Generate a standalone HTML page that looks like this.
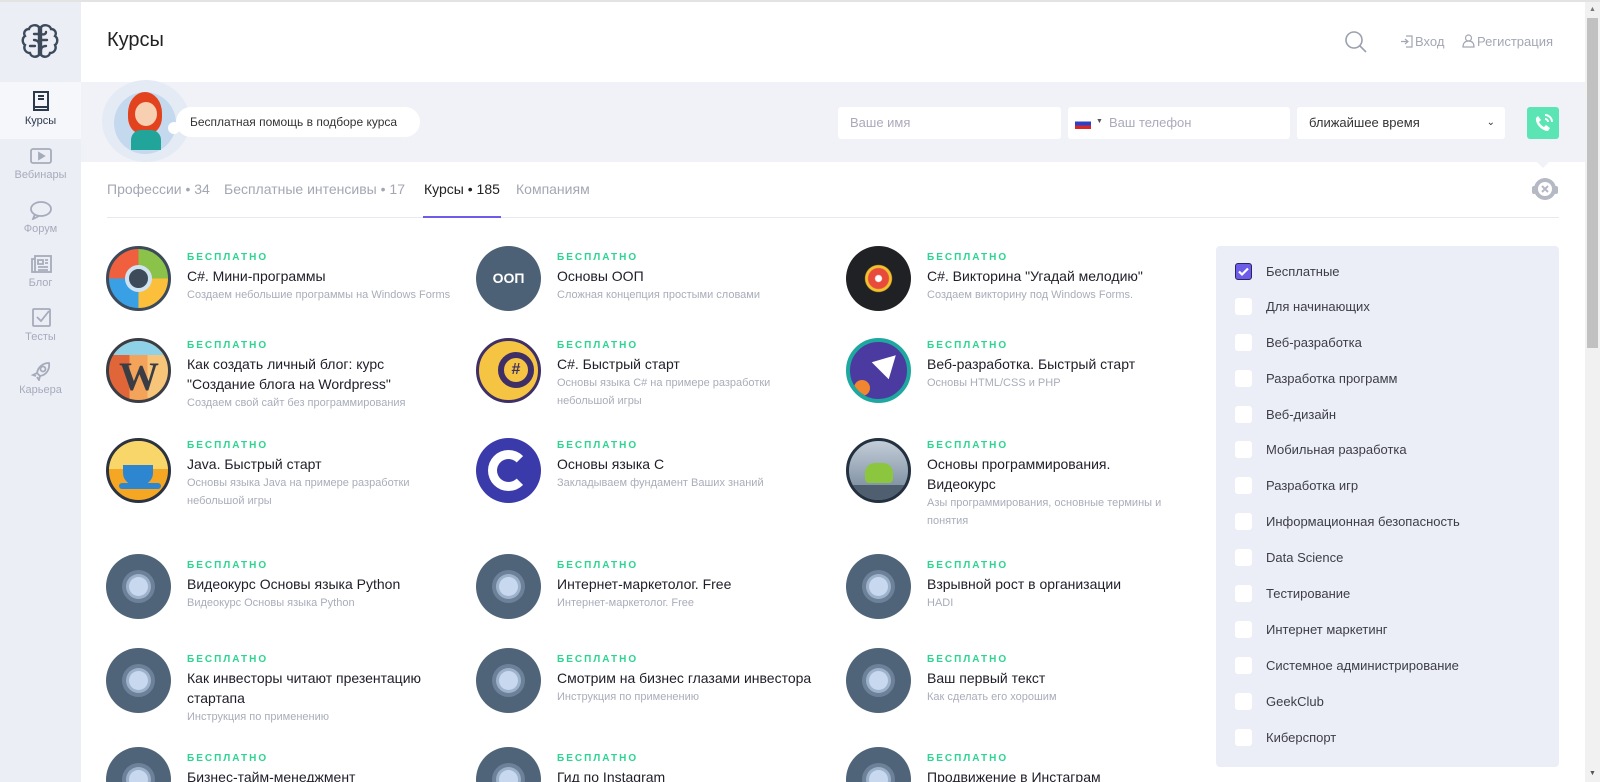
<!DOCTYPE html>
<html><head><meta charset="utf-8">
<style>
*{margin:0;padding:0;box-sizing:border-box}
html,body{width:1600px;height:782px;overflow:hidden}
body{background:#fff;font-family:"Liberation Sans","Noto Sans CJK SC",sans-serif;position:relative;color:#222}
.a{position:absolute}
#topline{left:0;top:0;width:1600px;height:2px;background:#e3e3e3}
#side{left:0;top:2px;width:81px;height:780px;background:#eceef6}
.nav{position:absolute;left:0;width:81px;text-align:center;font-size:11px;color:#a6abbb}
.nav svg{display:block;margin:0 auto 3px}
#band{left:81px;top:82px;width:1504px;height:80px;background:#f1f2f7}
.inp{position:absolute;top:107px;height:32px;background:#fff;border-radius:3px;font-size:13px;color:#aab;line-height:32px;padding-left:12px}
.tab{position:absolute;top:181px;font-size:14px;color:#a3a7b3}
.it{position:absolute;width:360px}
.ic{position:absolute;left:0;top:0;width:65px;height:65px;border-radius:50%;overflow:hidden}
.tx{position:absolute;left:81px;top:4px;width:270px}
.up .tx{top:0}
.b{font-size:10px;font-weight:bold;letter-spacing:2px;color:#2ed492;line-height:16px}
.t{font-size:14px;color:#1e1e28;line-height:20px}
.d{font-size:11px;color:#a9adb9;line-height:18px}
.g{background:#4f6479}
.g::before{content:"";position:absolute;left:16px;top:16px;width:33px;height:33px;border-radius:50%;background:#6d8299}
.g::after{content:"";position:absolute;left:23px;top:23px;width:19px;height:19px;border-radius:50%;background:#c8d8ee;box-shadow:0 0 0 3px #9db2cb}
#panel{left:1216px;top:246px;width:343px;height:521px;background:#eceef7;border-radius:4px}
.f{position:absolute;left:19px;font-size:13px;color:#3d3d48;height:18px;line-height:18px}
.f i{position:absolute;left:0;top:0;width:17px;height:17px;background:#fff;border-radius:3px}
.f span{position:absolute;left:31px;white-space:nowrap}
</style></head><body>
<div class="a" id="topline"></div>
<div class="a" id="side"></div>
<svg class="a" style="left:20px;top:22px" width="40" height="40" viewBox="0 0 40 40" fill="none" stroke="#3c4a5c" stroke-width="2.4" stroke-linecap="round"><path d="M19 5c-3-3-9-2-10 2-4 0-6 4-4 7-3 2-3 7 0 9-2 4 1 8 5 8 1 4 6 5 9 2zM21 5c3-3 9-2 10 2 4 0 6 4 4 7 3 2 3 7 0 9 2 4-1 8-5 8-1 4-6 5-9 2z"/><path d="M19 12h-5M14 18c3 0 5 2 5 4M10 24h5M21 12c3 1 5 0 5-2M21 18h6M26 24c-2 0-5 1-5 4"/></svg>
<div class="a" style="left:0;top:82px;width:81px;height:57px;background:#f6f7fb"></div>
<div class="nav" style="top:90px;color:#2d3a4b"><svg width="22" height="22" viewBox="0 0 22 22" fill="none" stroke="#2d3a4b" stroke-width="2"><rect x="4" y="2" width="14" height="18"/><path d="M4 17h14M8 6h6M8 9h6"/></svg>Курсы</div>
<div class="nav" style="top:146px"><svg width="24" height="20" viewBox="0 0 24 20" fill="none" stroke="#a6abbb" stroke-width="1.8"><rect x="2" y="3" width="20" height="14" rx="2"/><path d="M10 7l5 3-5 3z" fill="#a6abbb"/></svg>Вебинары</div>
<div class="nav" style="top:200px"><svg width="24" height="20" viewBox="0 0 24 20" fill="none" stroke="#a6abbb" stroke-width="1.8"><ellipse cx="12" cy="9" rx="10" ry="7"/><path d="M6 14l-2 5 6-3"/></svg>Форум</div>
<div class="nav" style="top:254px"><svg width="24" height="20" viewBox="0 0 24 20" fill="none" stroke="#a6abbb" stroke-width="1.8"><rect x="6" y="2" width="16" height="16"/><path d="M6 5H3v13h3M9 6h5v4H9zM16 6h3M16 9h3M9 13h10M9 16h10"/></svg>Блог</div>
<div class="nav" style="top:308px"><svg width="24" height="20" viewBox="0 0 24 20" fill="none" stroke="#a6abbb" stroke-width="1.8"><rect x="4" y="1" width="17" height="17" rx="1"/><path d="M8 9l4 4 8-10"/></svg>Тесты</div>
<div class="nav" style="top:361px"><svg width="24" height="20" viewBox="0 0 24 20" fill="none" stroke="#a6abbb" stroke-width="1.8"><path d="M20 2c-6 0-11 4-12 10l3 3c6-1 10-6 9-13z"/><circle cx="14" cy="8" r="2.5"/><path d="M8 12l-4 2 3 1M11 15l-1 4-2-3"/></svg>Карьера</div>

<div class="a" style="left:107px;top:29px;font-size:20px;color:#222">Курсы</div>
<svg class="a" style="left:1344px;top:30px" width="24" height="24" viewBox="0 0 24 24" fill="none" stroke="#9aa0ad" stroke-width="1.6"><circle cx="10" cy="10" r="8"/><path d="M16 16l6 6"/></svg>
<svg class="a" style="left:1400px;top:35px" width="13" height="13" viewBox="0 0 13 13" fill="none" stroke="#a3a7b3" stroke-width="1.2"><path d="M6 1h6v11H6M1 6.5h7M5 4l3 2.5L5 9"/></svg>
<div class="a" style="left:1415px;top:34px;font-size:13px;color:#a3a7b3">Вход</div>
<svg class="a" style="left:1462px;top:34px" width="13" height="14" viewBox="0 0 13 14" fill="none" stroke="#a3a7b3" stroke-width="1.2"><circle cx="6.5" cy="4" r="3"/><path d="M1 13c0-4 2-6 5.5-6S12 9 12 13z"/></svg>
<div class="a" style="left:1477px;top:34px;font-size:13px;color:#a3a7b3">Регистрация</div>

<div class="a" id="band"></div>
<div class="a" style="left:102px;top:80px;width:88px;height:82px;border-radius:50%;background:#e4ebf5;overflow:hidden"></div>
<div class="a" style="left:114px;top:92px;width:62px;height:62px;border-radius:50%;background:#c5d9ee"></div>
<div class="a" style="left:128px;top:92px;width:34px;height:42px;border-radius:50% 50% 40% 40%;background:#e2431e"></div>
<div class="a" style="left:135px;top:102px;width:22px;height:24px;border-radius:50%;background:#f6d0b0"></div>
<div class="a" style="left:131px;top:130px;width:30px;height:20px;border-radius:10px 10px 0 0;background:#21a59a"></div>
<div class="a" style="left:176px;top:107px;width:244px;height:30px;border-radius:15px;background:#fff;font-size:12px;line-height:30px;padding-left:14px;color:#333">Бесплатная помощь в подборе курса</div>
<div class="a" style="left:168px;top:122px;width:12px;height:12px;border-radius:50%;background:#fff"></div>
<div class="inp" style="left:838px;width:223px">Ваше имя</div>
<div class="inp" style="left:1068px;width:222px;padding-left:41px">Ваш телефон</div>
<div class="a" style="left:1075px;top:118px;width:16px;height:11px;background:linear-gradient(#fff 0 33%,#2b3fc9 33% 66%,#d62828 66%)"></div>
<div class="a" style="left:1096px;top:118px;font-size:7px;color:#555">▼</div>
<div class="inp" style="left:1297px;width:208px;color:#333">ближайшее время<span style="position:absolute;right:10px;top:0;font-size:10px">&#8964;</span></div>
<div class="a" style="left:1527px;top:107px;width:32px;height:32px;border-radius:3px;background:#5be5b5"></div>
<svg class="a" style="left:1533px;top:113px" width="20" height="20" viewBox="0 0 20 20" fill="none" stroke="#fff" stroke-width="2"><path d="M5 3l3 4-2 2c1 2 3 4 5 5l2-2 4 3-2 3C9 18 2 11 3 5z" fill="#fff" stroke="none"/><path d="M12 6a3 3 0 013 3M12 2a7 7 0 017 7"/></svg>
<div class="a" style="left:1537px;top:162px;border:6px solid transparent;border-top-color:#f1f2f7"></div>
<svg class="a" style="left:1530px;top:175px" width="30" height="28" viewBox="0 0 30 28"><circle cx="15" cy="14" r="11" fill="#b5b9c3"/><circle cx="15" cy="14" r="7" fill="#fff"/><path d="M12 11l6 6M18 11l-6 6" stroke="#b5b9c3" stroke-width="2"/><rect x="2" y="11" width="4" height="8" rx="2" fill="#b5b9c3"/><rect x="24" y="11" width="4" height="8" rx="2" fill="#b5b9c3"/></svg>

<div class="tab" style="left:107px">Профессии • 34</div>
<div class="tab" style="left:224px">Бесплатные интенсивы • 17</div>
<div class="tab" style="left:424px;color:#222">Курсы • 185</div>
<div class="tab" style="left:516px">Компаниям</div>
<div class="a" style="left:107px;top:217px;width:1452px;height:1px;background:#e8e9f0"></div>
<div class="a" style="left:423px;top:216px;width:78px;height:2px;background:#6c5ce7"></div>

<!-- row1 -->
<div class="it" style="left:106px;top:246px"><div class="ic" style="background:conic-gradient(#8bc34a 0 25%,#fbbf3b 25% 50%,#3aa0e6 50% 75%,#f0603f 75%);border:3px solid #3d4a5a"><div class="a" style="left:16px;top:16px;width:27px;height:27px;border-radius:50%;background:#3d4a5a;border:4px solid #cfe3f3"></div></div><div class="tx"><div class="b">БЕСПЛАТНО</div><div class="t">C#. Мини-программы</div><div class="d">Создаем небольшие программы на Windows Forms</div></div></div>
<div class="it" style="left:476px;top:246px"><div class="ic" style="background:#4d6176;color:#fff;font-weight:bold;font-size:14px;line-height:65px;text-align:center">ООП</div><div class="tx"><div class="b">БЕСПЛАТНО</div><div class="t">Основы ООП</div><div class="d">Сложная концепция простыми словами</div></div></div>
<div class="it" style="left:846px;top:246px"><div class="ic" style="background:radial-gradient(circle,#fff 0 3px,#e84a3c 4px 10px,#f2c12e 11px 13px,#1f2125 14px)"></div><div class="tx"><div class="b">БЕСПЛАТНО</div><div class="t">C#. Викторина "Угадай мелодию"</div><div class="d">Создаем викторину под Windows Forms.</div></div></div>
<!-- row2 -->
<div class="it up" style="left:106px;top:338px"><div class="ic" style="background:linear-gradient(90deg,#e0663a 0 35%,#f4a45a 35% 65%,#f7c57a 65%);border:3px solid #3a3d44"><div class="a" style="left:0;top:0;width:65px;height:14px;background:#8fd2e8"></div><div class="a" style="left:10px;top:12px;font:bold 40px 'Liberation Serif',serif;color:#3a3d44">W</div></div><div class="tx"><div class="b">БЕСПЛАТНО</div><div class="t">Как создать личный блог: курс<br>"Создание блога на Wordpress"</div><div class="d">Создаем свой сайт без программирования</div></div></div>
<div class="it up" style="left:476px;top:338px"><div class="ic" style="background:#f5c443;border:3px solid #3e2f66"><div class="a" style="left:19px;top:11px;width:36px;height:36px;border-radius:50%;border:6px solid #3e2f66;font:bold 16px sans-serif;color:#3e2f66;text-align:center;line-height:24px">#</div></div><div class="tx"><div class="b">БЕСПЛАТНО</div><div class="t">C#. Быстрый старт</div><div class="d">Основы языка C# на примере разработки<br>небольшой игры</div></div></div>
<div class="it up" style="left:846px;top:338px"><div class="ic" style="background:#4b3aa0;border:4px solid #1fa8a0"><div class="a" style="left:26px;top:10px;width:0;height:0;border-left:12px solid transparent;border-right:12px solid transparent;border-bottom:22px solid #fff;transform:rotate(45deg)"></div><div class="a" style="left:4px;top:38px;width:16px;height:16px;border-radius:50%;background:#f0862f"></div></div><div class="tx"><div class="b">БЕСПЛАТНО</div><div class="t">Веб-разработка. Быстрый старт</div><div class="d">Основы HTML/CSS и PHP</div></div></div>
<!-- row3 -->
<div class="it up" style="left:106px;top:438px"><div class="ic" style="background:#f5a623;border:3px solid #2b3240"><div class="a" style="left:0;top:0;width:65px;height:28px;background:#f9d66a"></div><div class="a" style="left:14px;top:24px;width:30px;height:20px;border-radius:0 0 12px 12px;background:#2e86d1"></div><div class="a" style="left:10px;top:42px;width:42px;height:6px;border-radius:3px;background:#2e86d1"></div></div><div class="tx"><div class="b">БЕСПЛАТНО</div><div class="t">Java. Быстрый старт</div><div class="d">Основы языка Java на примере разработки<br>небольшой игры</div></div></div>
<div class="it up" style="left:476px;top:438px"><div class="ic" style="background:#3a3aaa"><div class="a" style="left:12px;top:12px;width:41px;height:41px;border-radius:50%;border:9px solid #fff;border-right-color:transparent"></div></div><div class="tx"><div class="b">БЕСПЛАТНО</div><div class="t">Основы языка С</div><div class="d">Закладываем фундамент Ваших знаний</div></div></div>
<div class="it up" style="left:846px;top:438px"><div class="ic" style="background:linear-gradient(#c3cdd8,#6f8296);border:3px solid #233040"><div class="a" style="left:16px;top:22px;width:28px;height:20px;border-radius:10px 10px 4px 4px;background:#8cc63f"></div><div class="a" style="left:0;top:44px;width:65px;height:20px;background:#4f5f70"></div></div><div class="tx"><div class="b">БЕСПЛАТНО</div><div class="t">Основы программирования.<br>Видеокурс</div><div class="d">Азы программирования, основные термины и<br>понятия</div></div></div>
<!-- row4 -->
<div class="it" style="left:106px;top:554px"><div class="ic g"></div><div class="tx"><div class="b">БЕСПЛАТНО</div><div class="t">Видеокурс Основы языка Python</div><div class="d">Видеокурс Основы языка Python</div></div></div>
<div class="it" style="left:476px;top:554px"><div class="ic g"></div><div class="tx"><div class="b">БЕСПЛАТНО</div><div class="t">Интернет-маркетолог. Free</div><div class="d">Интернет-маркетолог. Free</div></div></div>
<div class="it" style="left:846px;top:554px"><div class="ic g"></div><div class="tx"><div class="b">БЕСПЛАТНО</div><div class="t">Взрывной рост в организации</div><div class="d">HADI</div></div></div>
<!-- row5 -->
<div class="it" style="left:106px;top:648px"><div class="ic g"></div><div class="tx"><div class="b">БЕСПЛАТНО</div><div class="t">Как инвесторы читают презентацию<br>стартапа</div><div class="d">Инструкция по применению</div></div></div>
<div class="it" style="left:476px;top:648px"><div class="ic g"></div><div class="tx"><div class="b">БЕСПЛАТНО</div><div class="t">Смотрим на бизнес глазами инвестора</div><div class="d">Инструкция по применению</div></div></div>
<div class="it" style="left:846px;top:648px"><div class="ic g"></div><div class="tx"><div class="b">БЕСПЛАТНО</div><div class="t">Ваш первый текст</div><div class="d">Как сделать его хорошим</div></div></div>
<!-- row6 -->
<div class="it" style="left:106px;top:747px"><div class="ic g"></div><div class="tx"><div class="b">БЕСПЛАТНО</div><div class="t">Бизнес-тайм-менеджмент</div></div></div>
<div class="it" style="left:476px;top:747px"><div class="ic g"></div><div class="tx"><div class="b">БЕСПЛАТНО</div><div class="t">Гид по Instagram</div></div></div>
<div class="it" style="left:846px;top:747px"><div class="ic g"></div><div class="tx"><div class="b">БЕСПЛАТНО</div><div class="t">Продвижение в Инстаграм</div></div></div>

<div class="a" id="panel">
<div class="f" style="top:17px"><i style="background:#6c5ce7;border:1px solid #2a2560"><svg width="15" height="15" viewBox="0 0 15 15"><path d="M3 7.5l3 3 6-6" stroke="#fff" stroke-width="2.2" fill="none"/></svg></i><span>Бесплатные</span></div>
<div class="f" style="top:52px"><i></i><span>Для начинающих</span></div>
<div class="f" style="top:88px"><i></i><span>Веб-разработка</span></div>
<div class="f" style="top:124px"><i></i><span>Разработка программ</span></div>
<div class="f" style="top:160px"><i></i><span>Веб-дизайн</span></div>
<div class="f" style="top:195px"><i></i><span>Мобильная разработка</span></div>
<div class="f" style="top:231px"><i></i><span>Разработка игр</span></div>
<div class="f" style="top:267px"><i></i><span>Информационная безопасность</span></div>
<div class="f" style="top:303px"><i></i><span>Data Science</span></div>
<div class="f" style="top:339px"><i></i><span>Тестирование</span></div>
<div class="f" style="top:375px"><i></i><span>Интернет маркетинг</span></div>
<div class="f" style="top:411px"><i></i><span>Системное администрирование</span></div>
<div class="f" style="top:447px"><i></i><span>GeekClub</span></div>
<div class="f" style="top:483px"><i></i><span>Киберспорт</span></div>
</div>

<div class="a" style="left:1585px;top:2px;width:15px;height:780px;background:#f1f1f1"></div>
<div class="a" style="left:1587px;top:18px;width:11px;height:330px;background:#c1c1c1"></div>
<div class="a" style="left:1589px;top:6px;font-size:7px;color:#777">▲</div>
<div class="a" style="left:1589px;top:770px;font-size:7px;color:#555">▼</div>
</body></html>
